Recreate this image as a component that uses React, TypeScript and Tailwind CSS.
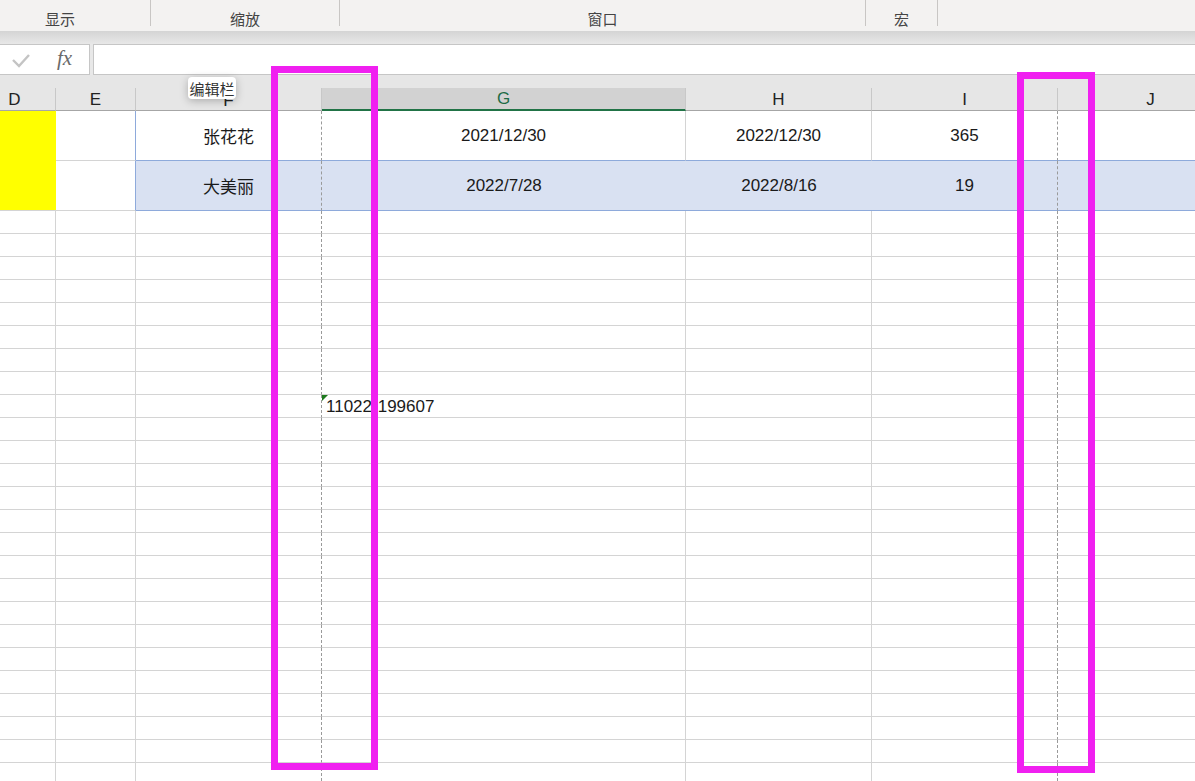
import React from "react";

const GRID = "grid grid-cols-[82px_80px_186px_364px_186px_186px_186px] ml-[-26px] w-[1250px]";
const num = { fontFamily: '"Liberation Sans", Arial, sans-serif' };
const cjk = { fontFamily: '"Noto Sans CJK SC", "Liberation Sans", sans-serif' };
const DASH = "border-r border-r-[#9a9a9a] [border-right-style:dashed]";

function Sep() {
  return <div className="w-px h-[26px] bg-[#c8c6c4] shrink-0" />;
}

export default function App() {
  const extraRows = Array.from({ length: 25 }, (_, i) => i);
  const headers = ["D", "E", "F", "G", "H", "I", "J"];
  return (
    <div className="relative w-[1195px] h-[781px] overflow-hidden bg-white" style={cjk}>
      {/* Ribbon group labels */}
      <div className="flex h-[31px] bg-[#f3f2f1] text-[15px] text-[#444]">
        <div className="w-[150px] shrink-0 flex">
          <div className="w-[120px] text-center pt-[8px] leading-[21px]">显示</div>
        </div>
        <Sep />
        <div className="w-[188px] shrink-0 text-center pt-[8px] leading-[21px]">缩放</div>
        <Sep />
        <div className="w-[525px] shrink-0 text-center pt-[8px] leading-[21px]">窗口</div>
        <Sep />
        <div className="w-[71px] shrink-0 text-center pt-[8px] leading-[21px]">宏</div>
        <Sep />
        <div className="flex-1" />
      </div>
      {/* shadow band */}
      <div className="h-[13px] bg-gradient-to-b from-[#d4d4d4] to-[#e8e8e8]" />
      {/* formula bar */}
      <div className="flex h-[31px] bg-[#e8e8e8] gap-[3px]">
        <div className="w-[90px] shrink-0 bg-white border border-l-0 border-[#c6c6c6] flex items-center">
          <svg width="20" height="16" viewBox="0 0 20 16" className="ml-[11px]">
            <polyline points="2,8 8,14 18,3" fill="none" stroke="#c4c4c4" strokeWidth="2.4" />
          </svg>
          <span
            className="ml-[26px] text-[21px] italic text-[#6a6a6a] leading-none pb-[2px]"
            style={{ fontFamily: '"Liberation Serif", "Times New Roman", serif' }}
          >
            fx
          </span>
        </div>
        <div className="flex-1 bg-white border border-r-0 border-[#c6c6c6]" />
      </div>
      {/* header area */}
      <div className="h-[13px] bg-[#e6e6e6]" />
      <div className="bg-[#e6e6e6]">
        <div className={`${GRID} h-[23px] text-[17px] text-[#222]`} style={num}>
          {headers.map((h) => {
            const sel = h === "G";
            return (
              <div
                key={h}
                className={`flex items-center justify-center leading-none border-r border-r-[#c8c8c8] ${
                  sel
                    ? "bg-[#d2d2d2] text-[#1d6b45] border-b-2 border-b-[#217346]"
                    : "border-b border-b-[#a6a6a6]"
                }`}
              >
                <span className={h === "F" ? "pt-[3px]" : ""}>{h}</span>
              </div>
            );
          })}
        </div>
      </div>
      {/* body */}
      <div className="text-[17px] text-[#1a1a1a]">
        {/* row 1 */}
        <div className={`${GRID} h-[50px]`}>
          <div className="bg-[#ffff00]" />
          <div className="border-r border-r-[#8eaadb] border-b border-b-[#d4d4d4]" />
          <div className={`flex items-center justify-center border-b border-b-[#8eaadb] ${DASH}`} style={cjk}>
            张花花
          </div>
          <div className="flex items-center justify-center border-b border-b-[#8eaadb] border-r border-r-[#d4d4d4]" style={num}>
            2021/12/30
          </div>
          <div className="flex items-center justify-center border-b border-b-[#8eaadb] border-r border-r-[#d4d4d4]" style={num}>
            2022/12/30
          </div>
          <div className={`flex items-center justify-center border-b border-b-[#8eaadb] ${DASH}`} style={num}>
            365
          </div>
          <div className="border-b border-b-[#8eaadb]" />
        </div>
        {/* row 2 */}
        <div className={`${GRID} h-[50px]`}>
          <div className="bg-[#ffff00] border-b border-b-[#d4d4d4]" />
          <div className="border-r border-r-[#8eaadb] border-b border-b-[#d4d4d4]" />
          <div className={`flex items-center justify-center bg-[#d9e1f2] border-b border-b-[#8eaadb] ${DASH}`} style={cjk}>
            大美丽
          </div>
          <div className="flex items-center justify-center bg-[#d9e1f2] border-b border-b-[#8eaadb]" style={num}>
            2022/7/28
          </div>
          <div className="flex items-center justify-center bg-[#d9e1f2] border-b border-b-[#8eaadb]" style={num}>
            2022/8/16
          </div>
          <div className={`flex items-center justify-center bg-[#d9e1f2] border-b border-b-[#8eaadb] ${DASH}`} style={num}>
            19
          </div>
          <div className="bg-[#d9e1f2] border-b border-b-[#8eaadb]" />
        </div>
        {/* remaining rows */}
        {extraRows.map((i) => (
          <div key={i} className={`${GRID} h-[23px]`}>
            <div className="border-b border-r border-[#d4d4d4]" />
            <div className="border-b border-r border-[#d4d4d4]" />
            <div className={`border-b border-b-[#d4d4d4] ${DASH}`} />
            <div className="relative border-b border-r border-[#d4d4d4] overflow-visible">
              {i === 8 && (
                <>
                  <div className="absolute left-0 top-0 w-0 h-0 border-t-[6px] border-t-[#1e7b1e] border-r-[6px] border-r-transparent" />
                  <div className="absolute left-[4px] top-0 h-full flex items-center whitespace-nowrap leading-none" style={num}>
                    11022-199607
                  </div>
                </>
              )}
            </div>
            <div className="border-b border-r border-[#d4d4d4]" />
            <div className={`border-b border-b-[#d4d4d4] ${DASH}`} />
            <div className="border-b border-[#d4d4d4]" />
          </div>
        ))}
      </div>

      {/* tooltip */}
      <div
        className="absolute left-[188px] top-[77px] w-[48px] h-[22px] bg-white rounded-[4px] shadow-[0_2px_8px_rgba(0,0,0,0.25)] flex items-center justify-center text-[15px] text-[#333] leading-none"
        style={cjk}
      >
        编辑栏
      </div>

      {/* annotation boxes */}
      <div className="absolute left-[271px] top-[66px] w-[107px] h-[704px] border-[7px] border-[#f020f0]" />
      <div className="absolute left-[1017px] top-[72px] w-[78px] h-[701px] border-[7px] border-[#f020f0]" />
    </div>
  );
}
